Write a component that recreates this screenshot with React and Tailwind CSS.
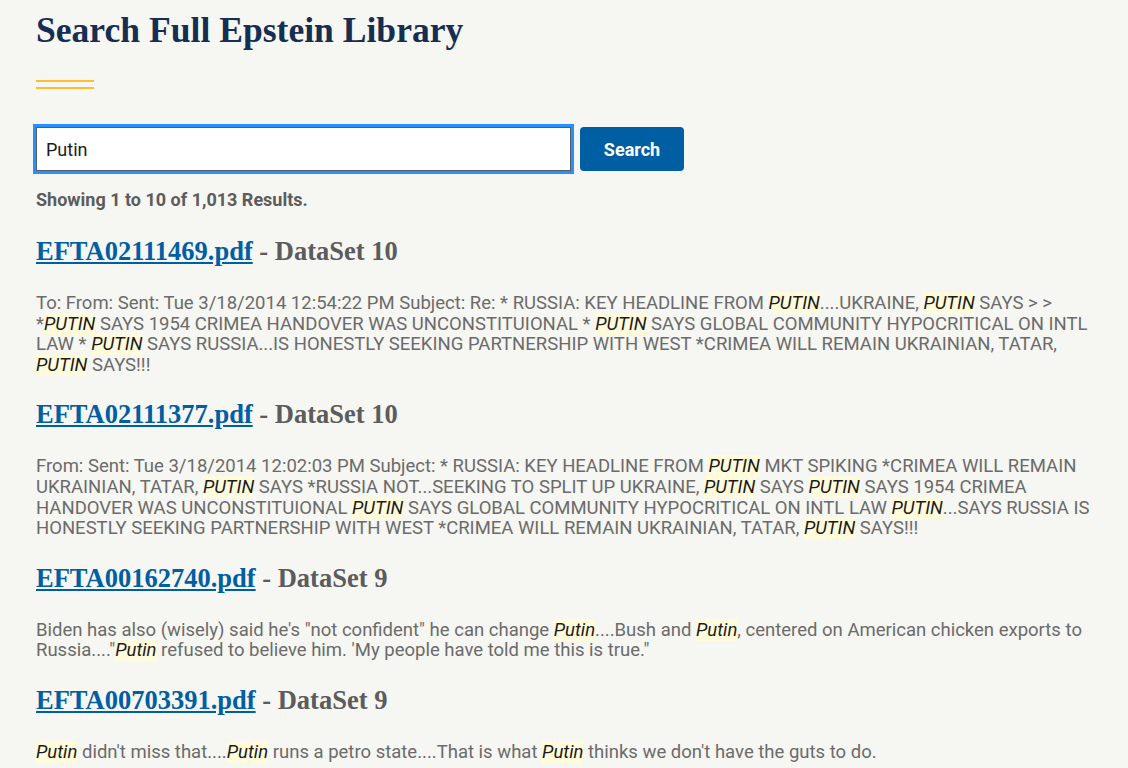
import { useState } from 'react';

const results = [
  {
    file: 'EFTA02111469.pdf',
    set: 'DataSet 10',
    parts: [
      'To: From: Sent: Tue 3/18/2014 12:54:22 PM Subject: Re: * RUSSIA: KEY HEADLINE FROM ',
      { hl: 'PUTIN' },
      '....UKRAINE, ',
      { hl: 'PUTIN' },
      ' SAYS > > *',
      { hl: 'PUTIN' },
      ' SAYS 1954 CRIMEA HANDOVER WAS UNCONSTITUIONAL * ',
      { hl: 'PUTIN' },
      ' SAYS GLOBAL COMMUNITY HYPOCRITICAL ON INTL LAW * ',
      { hl: 'PUTIN' },
      ' SAYS RUSSIA...IS HONESTLY SEEKING PARTNERSHIP WITH WEST *CRIMEA WILL REMAIN UKRAINIAN, TATAR, ',
      { hl: 'PUTIN' },
      ' SAYS!!!',
    ],
  },
  {
    file: 'EFTA02111377.pdf',
    set: 'DataSet 10',
    parts: [
      'From: Sent: Tue 3/18/2014 12:02:03 PM Subject: * RUSSIA: KEY HEADLINE FROM ',
      { hl: 'PUTIN' },
      ' MKT SPIKING *CRIMEA WILL REMAIN UKRAINIAN, TATAR, ',
      { hl: 'PUTIN' },
      ' SAYS *RUSSIA NOT...SEEKING TO SPLIT UP UKRAINE, ',
      { hl: 'PUTIN' },
      ' SAYS ',
      { hl: 'PUTIN' },
      ' SAYS 1954 CRIMEA HANDOVER WAS UNCONSTITUIONAL ',
      { hl: 'PUTIN' },
      ' SAYS GLOBAL COMMUNITY HYPOCRITICAL ON INTL LAW ',
      { hl: 'PUTIN' },
      '...SAYS RUSSIA IS HONESTLY SEEKING PARTNERSHIP WITH WEST *CRIMEA WILL REMAIN UKRAINIAN, TATAR, ',
      { hl: 'PUTIN' },
      ' SAYS!!!',
    ],
  },
  {
    file: 'EFTA00162740.pdf',
    set: 'DataSet 9',
    parts: [
      'Biden has also (wisely) said he\'s "not confident" he can change ',
      { hl: 'Putin' },
      '....Bush and ',
      { hl: 'Putin' },
      ', centered on American chicken exports to Russia...."',
      { hl: 'Putin' },
      " refused to believe him. 'My people have told me this is true.\"",
    ],
  },
  {
    file: 'EFTA00703391.pdf',
    set: 'DataSet 9',
    parts: [
      { hl: 'Putin' },
      " didn't miss that....",
      { hl: 'Putin' },
      ' runs a petro state....That is what ',
      { hl: 'Putin' },
      " thinks we don't have the guts to do.",
    ],
  },
];

const serif = "font-['Liberation_Serif',serif]";
const sans = "font-['Roboto',sans-serif]";

export default function App() {
  const [query, setQuery] = useState('Putin');

  return (
    <div className="min-h-screen bg-[#f6f6f2] overflow-hidden">
      <div className="pl-9 pr-4 w-[1128px]">
        <h1 className={`${serif} text-[35.6px] font-bold text-[#162e51] pt-[6px] leading-[48px]`}>
          Search Full Epstein Library
        </h1>

        <div className="mt-[26px] w-[58px] flex flex-col gap-[5px]">
          <div className="h-[2px] bg-[#ffbe2e]" />
          <div className="h-[2px] bg-[#ffbe2e]" />
        </div>

        <div className="mt-[35px] flex items-center gap-[6px] -ml-[3px]">
          <div className="w-[541px] h-[50px] border-[3px] border-[#2491ff]">
            <input
              value={query}
              onChange={(e) => setQuery(e.target.value)}
              className={`${sans} w-full h-full bg-white border border-[#565c65] px-[9px] text-[18px] text-[#1b1b1b] outline-none`}
            />
          </div>
          <button className={`${sans} h-[44px] w-[104px] rounded-[4px] bg-[#005ea2] text-white font-bold text-[18px]`}>
            Search
          </button>
        </div>

        <p className={`${sans} mt-[15px] text-[18px] font-bold text-[#5c5c5c] leading-[22px]`}>
          Showing 1 to 10 of 1,013 Results.
        </p>

        <div className="mt-[22px] flex flex-col">
          {results.map((r) => (
            <div key={r.file} className="mb-[21px]">
              <h2 className={`${serif} text-[26.5px] font-bold leading-[36px] text-[#5c5c5c]`}>
                <a href="#" className="text-[#005ea2] underline">{r.file}</a> - {r.set}
              </h2>
              <p className={`${sans} mt-[24px] text-[18.5px] leading-[20.6px] text-[#6b6b6b]`}>
                {r.parts.map((p, i) =>
                  typeof p === 'string' ? (
                    <span key={i}>{p}</span>
                  ) : (
                    <em key={i} className="bg-[#fffbdb] text-[#1b1b1b] italic">{p.hl}</em>
                  )
                )}
              </p>
            </div>
          ))}
        </div>
      </div>
    </div>
  );
}
